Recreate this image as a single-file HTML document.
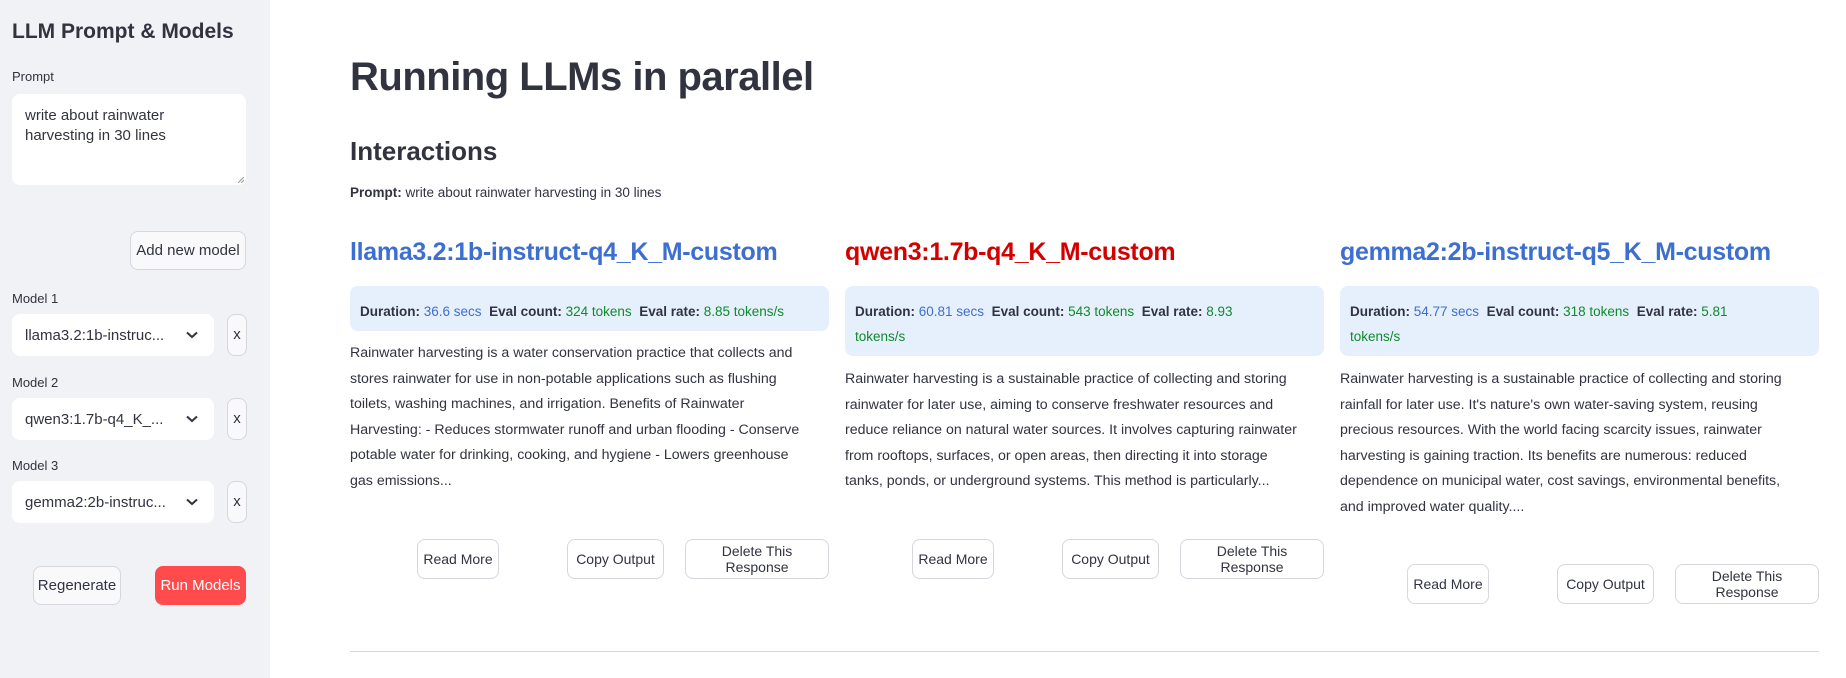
<!DOCTYPE html>
<html><head><meta charset="utf-8"><style>
*{box-sizing:border-box;margin:0;padding:0}
body{width:1846px;height:678px;overflow:hidden;background:#fff;font-family:"Liberation Sans",sans-serif;color:#31333f;position:relative}
.a{position:absolute}
#sb{left:0;top:0;width:270px;height:678px;background:#f0f2f6}
.lbl{font-size:13px;color:#31333f}
.inp{background:#fff;border-radius:8px}
.btn{position:absolute;border:1px solid #d5d7dd;border-radius:8px;background:#fff;font-size:14px;display:flex;align-items:center;justify-content:center;text-align:center;line-height:16px;color:#31333f}
.sbtn{background:#f9f9fb;font-size:15px}
.sel{font-size:15px;padding-left:13px;display:flex;align-items:center;height:42px;width:202px;left:12px}
.chev{position:absolute;right:16px;top:17px}
.xb{left:227px;width:20px;height:42px}
.col{position:absolute;top:0;width:479px}
.mt{font-size:25px;font-weight:bold;position:absolute;top:238px;white-space:nowrap;letter-spacing:-0.3px}
.box{position:absolute;top:286px;width:479px;background:#e6effc;border-radius:8px;padding:13px 10px 0 10px;font-size:13.5px;line-height:25px}
.box b{color:#31333f}
.bl{color:#3d6fd1}.gr{color:#0f8a2a}
.txt{position:absolute;font-size:14.2px;line-height:25.6px;white-space:nowrap;color:#31333f}
</style></head><body>
<div id="sb" class="a">
<div class="a" style="left:12px;top:20px;font-size:21px;font-weight:bold;white-space:nowrap">LLM Prompt &amp; Models</div>
<div class="a lbl" style="left:12px;top:69px">Prompt</div>
<div class="a inp" style="left:12px;top:94px;width:234px;height:91px;padding:12px 13px;font-size:15px;line-height:20px">write about rainwater<br>harvesting in 30 lines
<svg class="a" style="right:2px;bottom:2px" width="6" height="6"><path d="M0 6L6 0M3 6L6 3" stroke="#999" stroke-width="1"/></svg></div>
<div class="btn sbtn" style="left:130px;top:231px;width:116px;height:39px">Add new model</div>
<div class="a lbl" style="left:12px;top:291px">Model 1</div>
<div class="a inp sel" style="top:314px">llama3.2:1b-instruc...<svg class="chev" width="12" height="8"><path d="M1 1.5L6 6L11 1.5" stroke="#31333f" stroke-width="2" fill="none"/></svg></div>
<div class="btn sbtn xb" style="top:314px">x</div>
<div class="a lbl" style="left:12px;top:375px">Model 2</div>
<div class="a inp sel" style="top:398px">qwen3:1.7b-q4_K_...<svg class="chev" width="12" height="8"><path d="M1 1.5L6 6L11 1.5" stroke="#31333f" stroke-width="2" fill="none"/></svg></div>
<div class="btn sbtn xb" style="top:398px">x</div>
<div class="a lbl" style="left:12px;top:458px">Model 3</div>
<div class="a inp sel" style="top:481px">gemma2:2b-instruc...<svg class="chev" width="12" height="8"><path d="M1 1.5L6 6L11 1.5" stroke="#31333f" stroke-width="2" fill="none"/></svg></div>
<div class="btn sbtn xb" style="top:481px">x</div>
<div class="btn sbtn" style="left:33px;top:566px;width:88px;height:39px">Regenerate</div>
<div class="btn" style="left:155px;top:566px;width:91px;height:39px;background:#ff4b4b;border-color:#ff4b4b;color:#fff;font-size:15px">Run Models</div>
</div>

<div class="a" style="left:350px;top:55px;font-size:40px;font-weight:bold;white-space:nowrap;letter-spacing:-0.5px">Running LLMs in parallel</div>
<div class="a" style="left:350px;top:136px;font-size:26px;font-weight:bold;white-space:nowrap">Interactions</div>
<div class="a" style="left:350px;top:185px;font-size:13.5px;white-space:nowrap"><b>Prompt:</b> write about rainwater harvesting in 30 lines</div>

<div class="col" style="left:350px">
<div class="mt" style="color:#3d6fd1">llama3.2:1b-instruct-q4_K_M-custom</div>
<div class="box" style="height:45px;white-space:nowrap"><b>Duration:</b> <span class="bl">36.6 secs</span> &nbsp;<b>Eval count:</b> <span class="gr">324 tokens</span> &nbsp;<b>Eval rate:</b> <span class="gr">8.85 tokens/s</span></div>
<div class="txt" style="top:341px">Rainwater harvesting is a water conservation practice that collects and<br>stores rainwater for use in non-potable applications such as flushing<br>toilets, washing machines, and irrigation. Benefits of Rainwater<br>Harvesting: - Reduces stormwater runoff and urban flooding - Conserve<br>potable water for drinking, cooking, and hygiene - Lowers greenhouse<br>gas emissions...</div>
<div class="btn" style="left:67px;top:539px;width:82px;height:40px">Read More</div>
<div class="btn" style="left:217px;top:539px;width:97px;height:40px">Copy Output</div>
<div class="btn" style="left:335px;top:539px;width:144px;height:40px">Delete This<br>Response</div>
</div>

<div class="col" style="left:845px">
<div class="mt" style="color:#d40000">qwen3:1.7b-q4_K_M-custom</div>
<div class="box" style="height:70px"><b>Duration:</b> <span class="bl">60.81 secs</span> &nbsp;<b>Eval count:</b> <span class="gr">543 tokens</span> &nbsp;<b>Eval rate:</b> <span class="gr">8.93<br>tokens/s</span></div>
<div class="txt" style="top:367px">Rainwater harvesting is a sustainable practice of collecting and storing<br>rainwater for later use, aiming to conserve freshwater resources and<br>reduce reliance on natural water sources. It involves capturing rainwater<br>from rooftops, surfaces, or open areas, then directing it into storage<br>tanks, ponds, or underground systems. This method is particularly...</div>
<div class="btn" style="left:67px;top:539px;width:82px;height:40px">Read More</div>
<div class="btn" style="left:217px;top:539px;width:97px;height:40px">Copy Output</div>
<div class="btn" style="left:335px;top:539px;width:144px;height:40px">Delete This<br>Response</div>
</div>

<div class="col" style="left:1340px">
<div class="mt" style="color:#3d6fd1">gemma2:2b-instruct-q5_K_M-custom</div>
<div class="box" style="height:70px"><b>Duration:</b> <span class="bl">54.77 secs</span> &nbsp;<b>Eval count:</b> <span class="gr">318 tokens</span> &nbsp;<b>Eval rate:</b> <span class="gr">5.81<br>tokens/s</span></div>
<div class="txt" style="top:367px">Rainwater harvesting is a sustainable practice of collecting and storing<br>rainfall for later use. It's nature's own water-saving system, reusing<br>precious resources. With the world facing scarcity issues, rainwater<br>harvesting is gaining traction. Its benefits are numerous: reduced<br>dependence on municipal water, cost savings, environmental benefits,<br>and improved water quality....</div>
<div class="btn" style="left:67px;top:564px;width:82px;height:40px">Read More</div>
<div class="btn" style="left:217px;top:564px;width:97px;height:40px">Copy Output</div>
<div class="btn" style="left:335px;top:564px;width:144px;height:40px">Delete This<br>Response</div>
</div>

<div class="a" style="left:350px;top:651px;width:1469px;height:1px;background:#d5d7dd"></div>
</body></html>
